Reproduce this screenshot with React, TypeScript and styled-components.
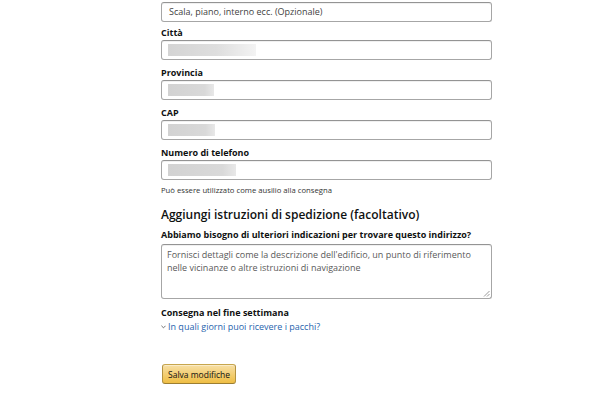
import styled, { createGlobalStyle } from 'styled-components';

const GlobalStyle = createGlobalStyle`
    html, body {
        margin: 0;
        padding: 0;
        background: #fff;
    }
    body {
        font-family: "Open Sans", "Noto Sans", Arial, sans-serif;
        color: #0f1111;
    }
`;

type Field = { label?: string; placeholder?: string; blur?: number; fade?: boolean };

const fields: Field[] = [
    { placeholder: 'Scala, piano, interno ecc. (Opzionale)' },
    { label: 'Città', blur: 88, fade: true },
    { label: 'Provincia', blur: 46 },
    { label: 'CAP', blur: 47 },
    { label: 'Numero di telefono', blur: 68 },
];

function App() {
    return (
        <Page>
            <GlobalStyle />
            <Form>
                {fields.map((f, i) => (
                    <FieldGroup key={i}>
                        {f.label && <Label>{f.label}</Label>}
                        <Input>
                            {f.placeholder ? (
                                <Placeholder>{f.placeholder}</Placeholder>
                            ) : (
                                <Blur $fade={f.fade} style={{ width: f.blur }} />
                            )}
                        </Input>
                    </FieldGroup>
                ))}
                <Hint>Può essere utilizzato come ausilio alla consegna</Hint>

                <Heading>Aggiungi istruzioni di spedizione (facoltativo)</Heading>
                <SubLabel>Abbiamo bisogno di ulteriori indicazioni per trovare questo indirizzo?</SubLabel>
                <TextArea>
                    <AreaText>
                        Fornisci dettagli come la descrizione dell'edificio, un punto di riferimento
                        <br />
                        nelle vicinanze o altre istruzioni di navigazione
                    </AreaText>
                    <Grip viewBox="0 0 8 8" width="8" height="8">
                        <path d="M7.5 2 L2 7.5 M7.5 5 L5 7.5" stroke="#9a9a9a" strokeWidth="1" />
                    </Grip>
                </TextArea>

                <Weekend>Consegna nel fine settimana</Weekend>
                <Link>
                    <Chevron viewBox="0 0 6 4" width="5" height="4">
                        <path d="M0.5 0.5 L3 3 L5.5 0.5" stroke="#555" fill="none" strokeWidth="1" />
                    </Chevron>
                    In quali giorni puoi ricevere i pacchi?
                </Link>

                <SaveButton>Salva modifiche</SaveButton>
            </Form>
        </Page>
    );
}

export default App;

const Page = styled.div`
    width: 610px;
    height: 396px;
    overflow: hidden;
    padding-left: 161px;
    box-sizing: border-box;
`;

const Form = styled.div`
    width: 331px;
    display: flex;
    flex-direction: column;
    padding-top: 2px;
`;

const FieldGroup = styled.div`
    display: flex;
    flex-direction: column;

    & + & {
        margin-top: 6px;
    }

    &:first-child + & {
        margin-top: 4px;
    }
`;

const Label = styled.div`
    font-size: 9px;
    font-weight: 700;
    line-height: 14px;
`;

const Input = styled.div`
    height: 20px;
    box-sizing: border-box;
    border: 1px solid #a6a6a6;
    border-top-color: #949494;
    border-radius: 3px;
    box-shadow: 0 1px 0 rgba(0, 0, 0, 0.06) inset;
    display: flex;
    align-items: center;
    padding: 0 7px 0 6px;
`;

const Placeholder = styled.span`
    font-size: 9px;
    color: #3f3f3f;
    line-height: 12px;
    padding-left: 1px;
`;

const Blur = styled.div<{ $fade?: boolean }>`
    height: 12px;
    background: ${(p) =>
        p.$fade
            ? 'linear-gradient(90deg, #d4d4d4 0%, #dedede 55%, #f3f3f3 100%)'
            : 'linear-gradient(90deg, #d2d2d2 0%, #d9d9d9 80%, #e8e8e8 100%)'};
    filter: blur(0.7px);
`;

const Hint = styled.div`
    font-size: 7.7px;
    color: #333;
    line-height: 11px;
    margin-top: 5px;
`;

const Heading = styled.div`
    font-size: 12px;
    font-weight: 600;
    line-height: 17px;
    margin-top: 10px;
`;

const SubLabel = styled.div`
    font-size: 9px;
    font-weight: 700;
    line-height: 12px;
    margin-top: 6px;
`;

const TextArea = styled.div`
    position: relative;
    height: 55px;
    box-sizing: border-box;
    border: 1px solid #a6a6a6;
    border-top-color: #949494;
    border-radius: 3px;
    box-shadow: 0 1px 0 rgba(0, 0, 0, 0.06) inset;
    padding: 3px 5px;
    margin-top: 3px;
`;

const AreaText = styled.div`
    font-size: 9px;
    color: #595959;
    line-height: 13px;
    white-space: nowrap;
`;

const Grip = styled.svg`
    position: absolute;
    right: 1px;
    bottom: 1px;
`;

const Weekend = styled.div`
    font-size: 9px;
    font-weight: 700;
    line-height: 13px;
    margin-top: 7px;
`;

const Link = styled.div`
    font-size: 9px;
    color: #1f64ad;
    line-height: 13px;
    margin-top: 1px;
    display: flex;
    align-items: center;
    gap: 2px;
`;

const Chevron = styled.svg`
    flex: none;
`;

const SaveButton = styled.button`
    align-self: flex-start;
    margin-top: 31px;
    margin-left: 1px;
    height: 20px;
    padding: 0 5px;
    font-family: inherit;
    font-size: 8.5px;
    color: #111;
    background: linear-gradient(#f7dfa5, #efbe44);
    border: 1px solid;
    border-color: #c7a64e #b39241 #9c7e31;
    border-radius: 3px;
    box-shadow: 0 1px 0 rgba(255, 255, 255, 0.4) inset;
`;
